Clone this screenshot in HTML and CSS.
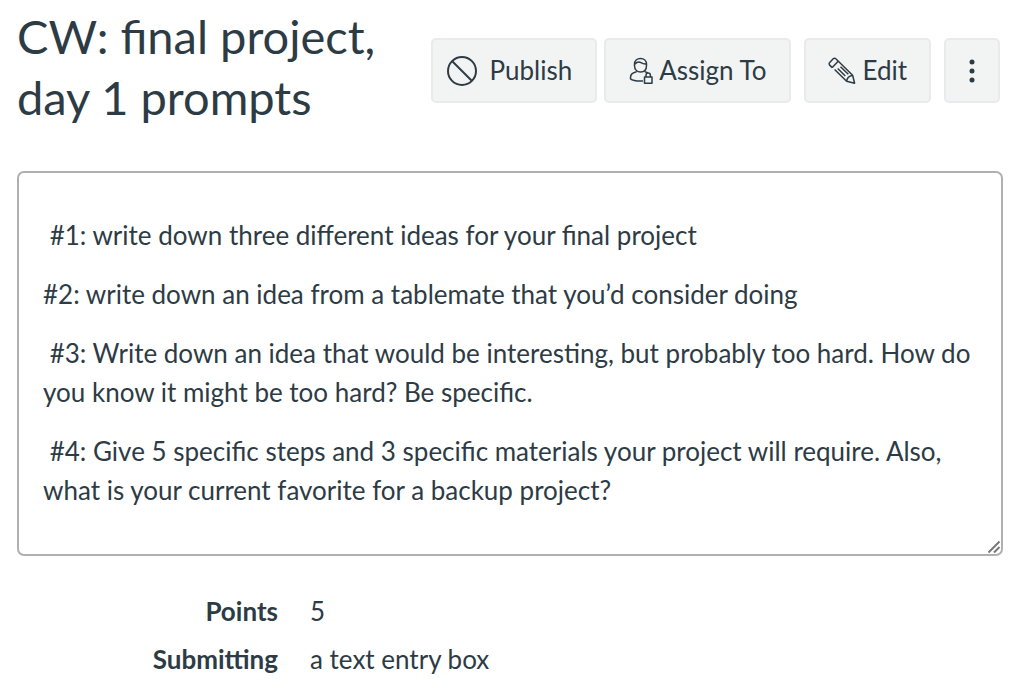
FILE: index.html
```html
<!DOCTYPE html>
<html lang="en">
<head>
<meta charset="utf-8">
<meta name="viewport" content="width=device-width, initial-scale=1">
<title>CW: final project, day 1 prompts</title>
<link rel="stylesheet" href="styles.css">
</head>
<body>
<main class="page">
  <header class="header">
    <h1 class="title">CW: final project, day 1 prompts</h1>
    <div class="actions">
      <button class="btn btn-publish" type="button">
        <svg class="icon-publish" viewBox="0 0 30 30" aria-hidden="true"><circle cx="15" cy="15" r="14"/><path d="M5 5l20 20"/></svg>
        Publish
      </button>
      <button class="btn btn-assign" type="button">
        <svg class="icon-assign" viewBox="0 0 24 28" aria-hidden="true"><path d="M17.500 8.500c0 4.200-2.500 6.500-5.900 6.500S5.500 12.700 5.500 8.500V7.300C5.500 3.800 8 1.500 11.500 1.500s6 2.300 6 5.800zM5.700 7.200c2.500-2.600 4.500-2.500 6.300-1.500 1.600 1 3.500 1.500 5.400 1.200M7.600 14.800C4 15.500 1.500 17.600 1.500 20.500v1.300c2.100 1.700 6.300 2.500 12.500 2.200M15.800 14.800c1.600.3 2.800.9 3.600 1.700M15.500 20h7.500v6.300h-7.500zM17 20v-1.800a2.200 2.200 0 0 1 4.400 0V20"/></svg>
        Assign To
      </button>
      <button class="btn btn-edit" type="button">
        <svg class="icon-edit" viewBox="0 0 28 28" aria-hidden="true"><path d="M4.200 10.600L1.700 8.100a1.800 1.800 0 0 1 0-2.600l3.500-3.700a1.800 1.800 0 0 1 2.600 0L24.600 18.200l2 8.100-8-2L6.600 12.500M4.200 10.600L10.200 4.200M18.600 24.300c.3-3 2.500-5.400 6-6.100M9.700 11.500L17.300 19M12.500 9.700l7.800 7.600"/></svg>
        Edit
      </button>
      <button class="btn btn-more" type="button" aria-label="More options">
        <svg class="icon-more" viewBox="0 0 6 26" aria-hidden="true"><circle cx="3" cy="4" r="2.500"/><circle cx="3" cy="13" r="2.500"/><circle cx="3" cy="22" r="2.500"/></svg>
      </button>
    </div>
  </header>
  <section class="description">
    <p>&nbsp;#1: write down three different ideas for your final project</p>
    <p>#2: write down an idea from a tablemate that you’d consider doing</p>
    <p>&nbsp;#3: Write down an idea that would be interesting, but probably too hard. How do you know it might be too hard? Be specific.</p>
    <p>&nbsp;#4: Give 5 specific steps and 3 specific materials your project will require. Also, what is your current favorite for a backup project?</p>
    <svg class="grip" viewBox="0 0 14 14" aria-hidden="true"><path d="M1.500 12.500l11-11M7 12.500L12.500 7"/></svg>
  </section>
  <dl class="details">
    <dt>Points</dt><dd>5</dd>
    <dt>Submitting</dt><dd>a text entry box</dd>
  </dl>
</main>
</body>
</html>
```
FILE: styles.css
```css
* { box-sizing: border-box; }
body {
  margin: 0;
  background: #fff;
  color: #2d3b45;
  font: 26px/39px Lato, "Open Sans", sans-serif;
}
.page { padding: 6px 21px 0 17px; }
.header {
  display: flex;
  justify-content: space-between;
  align-items: flex-start;
  gap: 24px;
  padding-right: 3px;
}
.title {
  flex: 1;
  margin: 0;
  font-size: 47px;
  font-weight: 400;
  line-height: 61px;
}
.actions { display: flex; padding-top: 32px; }
.btn {
  display: flex;
  align-items: center;
  justify-content: center;
  height: 65px;
  padding: 0 23px;
  border: 2px solid #e8eaec;
  border-radius: 5px;
  background: #f2f4f4;
  color: inherit;
  font: inherit;
  white-space: nowrap;
}
.btn svg, .grip { fill: none; stroke: #2d3b45; stroke-width: 2; flex: none; }
.btn-publish { padding: 0 23px 0 14px; gap: 13px; margin-right: 7px; }
.btn-assign { gap: 6px; margin-right: 13px; }
.btn-edit { gap: 6px; margin-right: 13px; padding: 0 22px; }
.btn-more { width: 56px; padding: 0; }
.icon-publish { width: 30px; height: 30px; }
.icon-assign { width: 24px; height: 28px; }
.icon-edit { width: 28px; height: 28px; }
.btn .icon-more { width: 6px; height: 26px; fill: #2d3b45; stroke: none; }
.btn .icon-assign, .btn .icon-edit { stroke-width: 1.500; stroke-linejoin: round; }
.description {
  position: relative;
  margin-top: 43px;
  padding: 43px 24px 44px;
  border: 2px solid #b0b0b0;
  border-radius: 7px;
}
.description p { margin: 0 0 20px; }
.description p:last-of-type { margin-bottom: 0; }
.grip {
  position: absolute;
  right: 0;
  bottom: 0;
  width: 14px;
  height: 14px;
  stroke: #777;
}
.details {
  display: grid;
  grid-template-columns: 261px 1fr;
  gap: 9px 32px;
  margin: 36px 0 0;
}
.details dt { font-weight: 700; text-align: right; }
.details dd { margin: 0; }
```
